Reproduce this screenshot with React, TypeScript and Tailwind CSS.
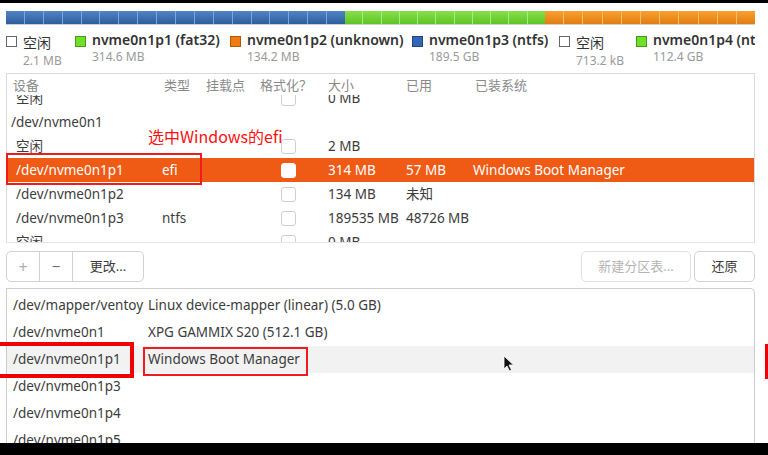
import React from "react";

const FONT = { fontFamily: '"Noto Sans", "Noto Sans CJK SC", sans-serif' };

function Seg({ w, n, cls, tick }: { w: number; n: number; cls: string; tick: string }) {
  return (
    <div className={`flex h-full ${cls}`} style={{ width: w }}>
      {Array.from({ length: n }).map((_, i) => (
        <div key={i} className={`flex-1 h-full ${i < n - 1 ? tick : ""}`} />
      ))}
    </div>
  );
}

function Legend({ w, box, name, size, cjk }: { w: number; box: string; name: string; size: string; cjk?: boolean }) {
  return (
    <div className="flex items-start gap-[6px] shrink-0" style={{ width: w }}>
      <div className={`w-[11px] h-[11px] mt-[5px] shrink-0 ${box}`} />
      <div className={`flex flex-col whitespace-nowrap ${cjk ? "pt-[3px]" : ""}`}>
        <span className={`text-[14px] leading-[18px] text-[#333] ${cjk ? "" : "font-semibold"}`}>{name}</span>
        <span className={`text-[12px] leading-[15px] text-[#9a9a9a] ${cjk ? "mt-[1px]" : ""}`}>{size}</span>
      </div>
    </div>
  );
}

type Row = { dev: string; indent?: boolean; type?: string; cb?: boolean; size?: string; used?: string; sys?: string; sel?: boolean };

const rows: Row[] = [
  { dev: "空闲", indent: true, cb: true, size: "0 MB" },
  { dev: "/dev/nvme0n1" },
  { dev: "空闲", indent: true, cb: true, size: "2 MB" },
  { dev: "/dev/nvme0n1p1", indent: true, type: "efi", cb: true, size: "314 MB", used: "57 MB", sys: "Windows Boot Manager", sel: true },
  { dev: "/dev/nvme0n1p2", indent: true, cb: true, size: "134 MB", used: "未知" },
  { dev: "/dev/nvme0n1p3", indent: true, type: "ntfs", cb: true, size: "189535 MB", used: "48726 MB" },
  { dev: "空闲", indent: true, cb: true, size: "0 MB" },
];

const devices: [string, string][] = [
  ["/dev/mapper/ventoy", "Linux device-mapper (linear) (5.0 GB)"],
  ["/dev/nvme0n1", "XPG GAMMIX S20 (512.1 GB)"],
  ["/dev/nvme0n1p1", "Windows Boot Manager"],
  ["/dev/nvme0n1p3", ""],
  ["/dev/nvme0n1p4", ""],
  ["/dev/nvme0n1p5", ""],
];

export default function App() {
  return (
    <div className="relative w-[768px] h-[455px] bg-white overflow-hidden flex flex-col text-[#3c3c3c]" style={FONT}>
      <div className="h-[3px] bg-black shrink-0" />
      <div className="flex flex-col flex-1 min-h-0 pl-[6px] pr-[13px]">
        {/* partition bar */}
        <div className="mt-[8px] h-[14px] flex shrink-0 border-b border-[#00000030]">
          <Seg w={339} n={18} cls="bg-linear-to-b from-[#4f84c8] to-[#2f5d9c]" tick="border-r border-[#7fa6da]" />
          <Seg w={200} n={11} cls="bg-linear-to-b from-[#86e04a] to-[#5cc522]" tick="border-r border-[#a6ec7c]" />
          <Seg w={210} n={11} cls="bg-linear-to-b from-[#f8a030] to-[#e37c0e]" tick="border-r border-[#fbbd6a]" />
        </div>
        {/* legend */}
        <div className="flex mt-[6px] h-[37px] shrink-0 overflow-hidden">
          <Legend w={69} box="border border-[#666] bg-white" name="空闲" size="2.1 MB" cjk />
          <Legend w={155} box="bg-[#6ee02a] border border-[#4a9a1a]" name="nvme0n1p1 (fat32)" size="314.6 MB" />
          <Legend w={182} box="bg-[#f07b12] border border-[#b05a0a]" name="nvme0n1p2 (unknown)" size="134.2 MB" />
          <Legend w={147} box="bg-[#3366b5] border border-[#21467e]" name="nvme0n1p3 (ntfs)" size="189.5 GB" />
          <Legend w={77} box="border border-[#666] bg-white" name="空闲" size="713.2 kB" cjk />
          <Legend w={140} box="bg-[#6ee02a] border border-[#4a9a1a]" name="nvme0n1p4 (ntfs)" size="112.4 GB" />
        </div>
        {/* table */}
        <div className="mt-[5px] h-[170px] shrink-0 border border-[#dadada] border-b-[#e4e4e4] flex flex-col overflow-hidden">
          <div className="h-[21px] shrink-0 flex items-end text-[13px] leading-[16px] text-[#8a8a8a] pb-[2px]">
            <div className="w-[157px] pl-[6px]">设备</div>
            <div className="w-[42px]">类型</div>
            <div className="w-[54px]">挂载点</div>
            <div className="w-[68px]" style={{ fontFamily: '"Noto Sans CJK SC", sans-serif' }}>格式化？</div>
            <div className="w-[78px]">大小</div>
            <div className="w-[69px]">已用</div>
            <div>已装系统</div>
          </div>
          <div className="flex-1 overflow-hidden">
            <div className="mt-[-9px]">
              {rows.map((r, i) => (
                <div key={i} className={`h-[24px] flex items-center text-[13.5px] whitespace-nowrap ${r.sel ? "bg-[#ef5a14] text-white" : "text-[#3c3c3c]"}`}>
                  <div className={`w-[155px] ${r.indent ? "pl-[9px]" : "pl-[4px]"}`}>{r.dev}</div>
                  <div className="w-[44px]">{r.type ?? ""}</div>
                  <div className="w-[54px]" />
                  <div className="w-[68px] pl-[21px]">
                    {r.cb && (
                      <div className={`w-[15px] h-[15px] rounded-[3px] border ${r.sel ? "bg-white border-white" : "border-[#cfcfcf] bg-white"}`} />
                    )}
                  </div>
                  <div className="w-[78px]">{r.size ?? ""}</div>
                  <div className="w-[67px]">{r.used ?? ""}</div>
                  <div>{r.sys ?? ""}</div>
                </div>
              ))}
            </div>
          </div>
        </div>
        {/* buttons */}
        <div className="mt-[8px] h-[31px] shrink-0 flex items-stretch text-[13px]">
          <div className="flex border border-[#d2d2d2] rounded-[5px] overflow-hidden">
            <div className="w-[33px] flex items-center justify-center text-[#b0b0b0] text-[16px] border-r border-[#d2d2d2]">+</div>
            <div className="w-[33px] flex items-center justify-center text-[#707070] text-[15px] border-r border-[#d2d2d2]">−</div>
            <div className="w-[70px] flex items-center justify-center text-[#3c3c3c]">更改...</div>
          </div>
          <div className="flex-1" />
          <div className="w-[110px] flex items-center justify-center border border-[#e0e0e0] rounded-[5px] text-[#b4b4b4]">新建分区表...</div>
          <div className="w-[61px] ml-[3px] flex items-center justify-center border border-[#d2d2d2] rounded-[5px] text-[#3c3c3c]">还原</div>
        </div>
        {/* bottom list */}
        <div className="mt-[6px] flex-1 min-h-0 border-t border-l border-r border-[#cdcdcd] rounded-tr-[5px] overflow-hidden pt-[3px]">
          {devices.map(([d, n], i) => (
            <div key={i} className={`h-[27px] flex items-center text-[13.5px] whitespace-nowrap text-[#3c3c3c] ${i === 2 ? "bg-[#f2f2f2]" : ""}`}>
              <div className="w-[141px] pl-[6px] shrink-0">{d}</div>
              <div>{n}</div>
            </div>
          ))}
        </div>
      </div>
      <div className="h-[12px] bg-black shrink-0" />

      {/* annotations */}
      <div className="absolute left-[148px] top-[126px] text-[16px] leading-[20px] text-[#ff1010] whitespace-nowrap" style={{ fontFamily: '"Noto Sans CJK SC", "Noto Sans", sans-serif' }}>
        选中Windows的efi
      </div>
      <div className="absolute left-[6px] top-[153px] w-[196px] h-[32px] border-2 border-[#f01c1c]" />
      <div className="absolute left-[-4px] top-[342px] w-[138px] h-[36px] border-[4px] border-[#f00000]" />
      <div className="absolute left-[143px] top-[347px] w-[165px] h-[29px] border-2 border-[#f01c1c]" />
      <div className="absolute left-[765px] top-[344px] w-[20px] h-[35px] border-[3px] border-[#f00000]" />
      <svg className="absolute left-[503px] top-[355px]" width="12" height="17" viewBox="0 0 12 17">
        <path d="M1 1 L1 14 L4 11 L6.5 16 L8.5 15 L6 10 L10.5 10 Z" fill="#111" stroke="#fff" strokeWidth="0.8" />
      </svg>
    </div>
  );
}
